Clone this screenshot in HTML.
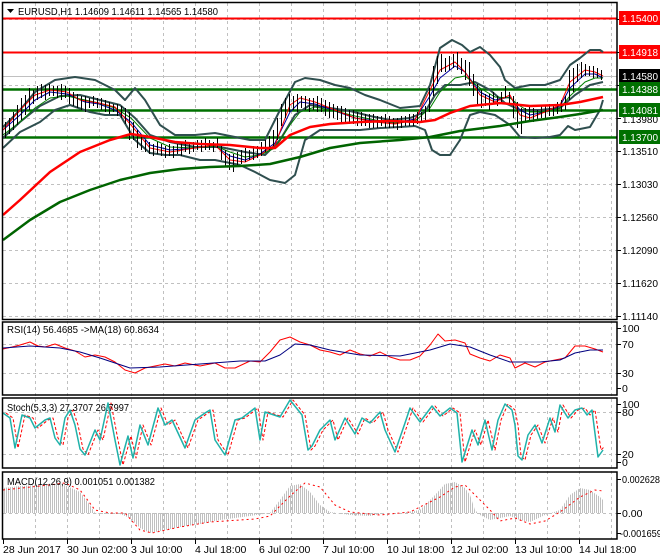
<!DOCTYPE html>
<html><head><meta charset="utf-8"><style>
html,body{margin:0;padding:0;background:#fff;width:660px;height:560px;overflow:hidden}
svg{display:block;font-family:"Liberation Sans",sans-serif;font-size:10.5px}
</style></head><body>
<svg width="660" height="560" viewBox="0 0 660 560" xmlns="http://www.w3.org/2000/svg">
<defs>
<pattern id="st" width="2" height="10" patternUnits="userSpaceOnUse"><rect x="0" y="0" width="1" height="10" fill="#c0c0c0"/></pattern>
<clipPath id="cm"><rect x="3" y="3" width="614" height="316"/></clipPath>
</defs>
<rect width="660" height="560" fill="#fff"/>
<g stroke="#c0c0c0" stroke-dasharray="3,3" stroke-width="1" fill="none">
<path d="M35.5 3V539M67.5 3V539M99.5 3V539M131.5 3V539M163.5 3V539M195.5 3V539M227.5 3V539M259.5 3V539M291.5 3V539M323.5 3V539M355.5 3V539M387.5 3V539M419.5 3V539M451.5 3V539M483.5 3V539M515.5 3V539M547.5 3V539M579.5 3V539M611.5 3V539"/>
<path d="M3 19.5H617M3 52.5H617M3 85.5H617M3 118.5H617M3 151.5H617M3 184.5H617M3 217.5H617M3 250.5H617M3 283.5H617M3 316.5H617"/>
<path d="M3 344.5H617M3 373.5H617M3 412.5H617M3 454.5H617M3 513.5H617"/>
</g>
<g clip-path="url(#cm)" fill="none" stroke-linejoin="round">
<line x1="3" y1="76.5" x2="617" y2="76.5" stroke="#c0c0c0"/>
<path d="M3 18.5H617M3 52.5H617" stroke="#ff0000" stroke-width="2"/>
<path d="M3 89.5H617M3 110.5H617M3 137.5H617" stroke="#007000" stroke-width="2.5"/>
<polyline stroke="#2f4f4f" stroke-width="2" points="3,127 20,110 35,92 55,80 75,77 95,80 115,90 125,100 135,88 145,100 160,125 175,135 195,135 215,133 235,137 250,140 265,140 280,110 295,82 305,78 320,80 335,85 350,88 365,95 380,100 400,108 420,106 430,85 440,48 452,40 462,45 470,52 480,47 490,55 500,67 505,80 515,88 530,85 545,85 560,80 570,65 580,58 590,50 600,50 603,52"/>
<polyline stroke="#2f4f4f" stroke-width="2" points="3,148 20,132 40,122 55,110 70,105 90,112 105,115 120,115 135,140 150,153 165,155 180,155 200,160 215,160 225,162 240,165 255,172 270,180 285,183 295,175 305,140 320,130 340,130 360,130 380,128 400,127 415,126 425,130 432,150 440,155 450,155 460,140 470,115 480,112 495,115 510,125 520,137 535,138 550,137 560,135 568,126 575,130 590,127 600,110 603,100"/>
<polyline stroke="#2f4f4f" stroke-width="2" points="3,138 20,122 40,106 60,96 80,95 100,100 120,105 135,118 150,135 170,142 195,147 220,147 245,152 265,155 280,140 295,115 310,105 330,108 350,111 370,116 390,120 410,118 425,112 435,95 445,85 460,85 475,82 490,90 505,103 520,110 540,110 560,108 575,95 590,85 603,82"/>
<polyline stroke="#0000a0" stroke-width="1" points="3,130 20,115 35,100 50,92 67,94 85,102 99,104 115,110 131,122 150,145 170,150 195,148 215,146 230,156 245,160 260,154 275,143 290,112 300,102 315,104 335,111 355,118 375,121 395,123 415,119 430,96 440,78 455,66 465,72 480,92 495,100 510,97 520,110 530,115 545,112 560,106 570,88 585,74 595,74 603,78"/>
<polyline stroke="#008000" stroke-width="1" points="3,135 20,122 35,108 50,98 67,96 85,100 99,103 115,108 131,118 150,138 170,147 195,148 215,146 230,152 245,157 260,155 275,148 290,125 300,112 315,107 335,111 355,116 375,120 395,123 415,121 430,108 440,92 455,78 465,76 480,88 495,97 510,98 520,106 530,112 545,112 560,108 570,96 585,82 595,78 603,78"/>
<polyline stroke="#ff0000" stroke-width="1" points="3,130 20,110 35,95 50,90 67,92 80,100 99,103 115,107 131,125 150,148 170,152 195,148 215,145 230,160 245,162 260,155 275,145 290,105 300,98 315,102 335,110 355,118 375,122 395,124 415,120 430,90 440,70 455,62 465,72 480,95 495,102 510,95 520,115 530,118 545,112 560,105 570,82 585,70 595,72 603,76"/>
<path stroke="#000" stroke-width="1" transform="translate(0.5,0)" d="M5 122V138M9 118V134M13 112V130M17 105V125M21 98V120M25 95V115M29 88V110M33 90V104M37 86V100M41 84V98M45 85V100M49 84V96M53 86V96M57 86V98M61 84V100M65 86V98M69 88V104M73 92V106M77 94V108M81 96V110M85 96V112M89 98V108M93 96V106M97 98V108M101 98V110M105 100V112M109 102V114M113 104V112M117 104V116M121 106V118M125 108V124M129 112V140M133 122V140M137 130V148M141 136V150M145 140V152M149 142V154M153 144V156M157 142V154M161 144V156M165 146V158M169 144V156M173 146V158M177 144V154M181 142V156M185 140V152M189 142V154M193 142V152M197 140V150M201 140V152M205 138V150M209 140V150M213 142V152M217 138V148M221 146V160M225 150V166M229 154V170M233 154V172M237 152V166M241 150V164M245 148V162M249 150V160M253 146V160M257 146V158M261 142V156M265 140V152M269 136V150M273 130V146M277 118V140M281 104V126M285 98V118M289 94V112M293 96V110M297 94V112M301 96V108M305 96V110M309 98V112M313 98V110M317 96V112M321 98V112M325 100V116M329 102V118M333 104V118M337 106V120M341 106V122M345 108V122M349 110V124M353 110V124M357 112V126M361 112V126M365 114V126M369 114V128M373 114V128M377 116V128M381 116V126M385 114V128M389 116V128M393 118V128M397 118V130M401 116V128M405 116V126M409 114V126M413 114V126M417 112V124M421 112V122M425 106V120M429 88V112M433 66V96M437 56V84M441 54V72M445 58V72M449 56V70M453 54V68M457 52V70M461 58V74M465 60V80M469 62V86M473 74V96M477 84V104M481 90V108M485 94V106M489 94V110M493 92V104M497 96V106M501 92V104M505 86V98M509 92V104M513 96V118M517 102V128M521 108V134M525 108V122M529 106V122M533 108V122M537 110V120M541 106V118M545 106V118M549 104V116M553 104V116M557 102V114M561 100V112M565 96V110M569 70V100M573 68V92M577 64V82M581 62V78M585 64V76M589 66V76M593 66V78M597 68V78M601 70V80"/>
<polyline stroke="#ff0000" stroke-width="2.5" points="3,215 20,200 50,172 80,152 110,140 131,134 150,137 175,142 200,144 230,145 260,148 275,148 290,135 310,127 330,124 360,122 390,121 420,122 435,120 450,113 470,106 500,103 530,106 560,105 580,102 603,97"/>
<polyline stroke="#006400" stroke-width="2.5" points="3,240 30,220 60,202 90,190 120,180 150,173 180,169 210,167 240,166 270,164 300,157 330,148 360,143 400,140 430,137 460,131 500,126 530,121 560,117 580,114 603,110"/>
</g>
<g fill="none" stroke-width="1" stroke-linejoin="round">
<polyline stroke="#ff0000" points="3,349 12,347 20,345 30,342 38,346 45,347 55,344 65,348 75,351 85,357 95,355 105,357 115,362 125,370 135,373 145,368 155,366 165,364 175,366 185,363 200,366 215,363 225,368 235,368 250,361 260,362 270,352 280,340 290,337 300,342 310,345 320,350 330,352 340,355 350,350 360,354 370,356 380,352 390,357 400,360 410,360 420,356 430,345 438,334 445,341 455,340 465,343 470,354 480,358 490,361 500,355 510,358 515,368 525,363 535,367 545,362 555,360 565,358 570,352 575,346 585,346 595,349 603,352"/>
<polyline stroke="#000080" points="3,348 30,346 60,348 80,352 100,358 130,368 160,367 200,364 240,361 265,361 280,355 295,344 310,345 330,350 360,355 400,356 430,350 450,344 470,347 490,355 510,362 540,362 560,360 575,353 590,350 603,350"/>
<polyline stroke="#ff0000" stroke-dasharray="3,2" points="6,413 13,418 18,448 25,415 33,418 38,428 48,420 53,418 58,438 63,445 68,418 73,410 78,425 83,449 88,455 98,430 103,440 111,403 118,440 123,465 131,436 136,458 143,425 151,445 161,408 168,425 175,420 188,448 198,420 208,413 213,410 218,440 228,455 238,420 245,418 258,408 263,440 268,412 283,417 293,400 305,415 311,450 315,446 323,430 333,420 338,440 348,418 358,434 365,418 373,423 383,412 388,430 398,452 408,423 413,408 423,422 435,406 443,416 453,408 460,413 465,462 475,430 481,445 488,420 495,450 501,420 508,404 515,410 518,425 521,456 525,460 531,435 538,425 545,443 553,418 558,432 563,405 571,418 578,410 585,408 590,415 595,410 601,450 604,447"/>
<polyline stroke="#20b2aa" stroke-width="1.5" points="3,413 10,418 15,448 22,415 30,418 35,428 45,420 50,418 55,438 60,445 65,418 70,410 75,425 80,449 85,455 95,430 100,440 108,403 115,440 120,465 128,436 133,458 140,425 148,445 158,408 165,425 172,420 185,448 195,420 205,413 210,410 215,440 225,455 235,420 242,418 255,408 260,440 265,412 280,417 290,400 302,415 308,450 312,446 320,430 330,420 335,440 345,418 355,434 362,418 370,423 380,412 385,430 395,452 405,423 410,408 420,422 432,406 440,416 450,408 457,413 462,462 472,430 478,445 485,420 492,450 498,420 505,404 512,410 515,425 518,456 522,460 528,435 535,425 542,443 550,418 555,432 560,405 568,418 575,410 582,408 587,415 592,410 598,457 603,450"/>
<polygon fill="url(#st)" stroke="none" points="3,513 3,488 20,486 40,485 60,484 67,486 80,492 90,505 95,513 100,514 120,514 130,518 140,528 150,533 165,530 180,527 200,524 220,520 235,518 250,516 270,513 280,500 290,486 300,484 310,492 320,505 330,512 350,515 370,516 385,513 400,513 420,510 435,495 445,484 455,482 465,488 470,495 475,510 480,515 490,520 500,518 510,516 520,520 530,522 545,515 560,510 570,495 580,488 590,490 600,497 603,500 603,513"/>
<polyline stroke="#ff0000" stroke-dasharray="2,3" points="3,490 40,486 65,483 80,490 95,510 110,513 125,513 140,530 152,533 180,527 210,522 240,520 255,519 270,516 290,496 305,483 320,487 335,505 350,512 380,515 410,512 440,497 455,487 465,485 475,495 490,510 500,521 515,518 530,524 545,521 560,512 580,497 595,490 603,491"/>
</g>
<g fill="none" stroke="#000" stroke-width="1.5">
<rect x="2.5" y="2.5" width="614.5" height="317"/>
<rect x="2.5" y="322" width="614.5" height="73"/>
<rect x="2.5" y="398" width="614.5" height="70"/>
<rect x="2.5" y="472" width="614.5" height="67"/>
</g>
<g stroke="#000" stroke-width="1">
<path d="M617 19.5h4M617 52.5h4M617 85.5h4M617 118.5h4M617 151.5h4M617 184.5h4M617 217.5h4M617 250.5h4M617 283.5h4M617 316.5h4M617 328.5h4M617 344.5h4M617 373.5h4M617 388.5h4M617 404.5h4M617 412.5h4M617 454.5h4M617 462.5h4M617 479.5h4M617 513.5h4M617 533.5h4"/>
<path d="M3.5 539v5M67.5 539v5M131.5 539v5M195.5 539v5M259.5 539v5M323.5 539v5M387.5 539v5M451.5 539v5M515.5 539v5M579.5 539v5"/>
</g>
<path d="M7 9h7l-3.5 4z" fill="#000"/>
<text x="18" y="15" fill="#000" textLength="200" lengthAdjust="spacingAndGlyphs">EURUSD,H1  1.14609 1.14611 1.14565 1.14580</text>
<text x="7" y="333" textLength="152" lengthAdjust="spacingAndGlyphs">RSI(14) 56.4685  -&gt;MA(18) 60.8634</text>
<text x="7" y="411" textLength="122" lengthAdjust="spacingAndGlyphs">Stoch(5,3,3) 27.3707 26.7997</text>
<text x="7" y="485" textLength="148" lengthAdjust="spacingAndGlyphs">MACD(12,26,9) 0.001051 0.001382</text>
<g fill="#000">
<text x="622" y="123" textLength="36" lengthAdjust="spacingAndGlyphs">1.13980</text>
<text x="622" y="155" textLength="36" lengthAdjust="spacingAndGlyphs">1.13510</text>
<text x="622" y="188" textLength="36" lengthAdjust="spacingAndGlyphs">1.13030</text>
<text x="622" y="221" textLength="36" lengthAdjust="spacingAndGlyphs">1.12560</text>
<text x="622" y="254" textLength="36" lengthAdjust="spacingAndGlyphs">1.12090</text>
<text x="622" y="287" textLength="36" lengthAdjust="spacingAndGlyphs">1.11620</text>
<text x="622" y="320" textLength="36" lengthAdjust="spacingAndGlyphs">1.11140</text>
<text x="622" y="332">100</text>
<text x="622" y="348">70</text>
<text x="622" y="377">30</text>
<text x="622" y="392">0</text>
<text x="622" y="408">100</text>
<text x="622" y="416">80</text>
<text x="622" y="458">20</text>
<text x="622" y="466">0</text>
<text x="622" y="483" textLength="38" lengthAdjust="spacingAndGlyphs">0.002628</text>
<text x="622" y="517">0.00</text>
<text x="620" y="537" textLength="42" lengthAdjust="spacingAndGlyphs">-0.001659</text>
</g>
<g>
<rect x="619" y="11" width="41" height="14" fill="#ff0000"/><text x="622" y="22" fill="#fff" textLength="36" lengthAdjust="spacingAndGlyphs">1.15400</text>
<rect x="619" y="45" width="41" height="14" fill="#ff0000"/><text x="622" y="56" fill="#fff" textLength="36" lengthAdjust="spacingAndGlyphs">1.14918</text>
<rect x="619" y="69" width="41" height="14" fill="#000"/><text x="622" y="80" fill="#fff" textLength="36" lengthAdjust="spacingAndGlyphs">1.14580</text>
<rect x="619" y="82" width="41" height="14" fill="#007000"/><text x="622" y="93" fill="#fff" textLength="36" lengthAdjust="spacingAndGlyphs">1.14388</text>
<rect x="619" y="103" width="41" height="14" fill="#007000"/><text x="622" y="114" fill="#fff" textLength="36" lengthAdjust="spacingAndGlyphs">1.14081</text>
<rect x="619" y="130" width="41" height="14" fill="#007000"/><text x="622" y="141" fill="#fff" textLength="36" lengthAdjust="spacingAndGlyphs">1.13700</text>
</g>
<g fill="#000">
<text x="3" y="553">28 Jun 2017</text>
<text x="67" y="553">30 Jun 02:00</text>
<text x="131" y="553">3 Jul 10:00</text>
<text x="195" y="553">4 Jul 18:00</text>
<text x="259" y="553">6 Jul 02:00</text>
<text x="323" y="553">7 Jul 10:00</text>
<text x="387" y="553">10 Jul 18:00</text>
<text x="451" y="553">12 Jul 02:00</text>
<text x="515" y="553">13 Jul 10:00</text>
<text x="579" y="553">14 Jul 18:00</text>
</g>
</svg>
</body></html>
